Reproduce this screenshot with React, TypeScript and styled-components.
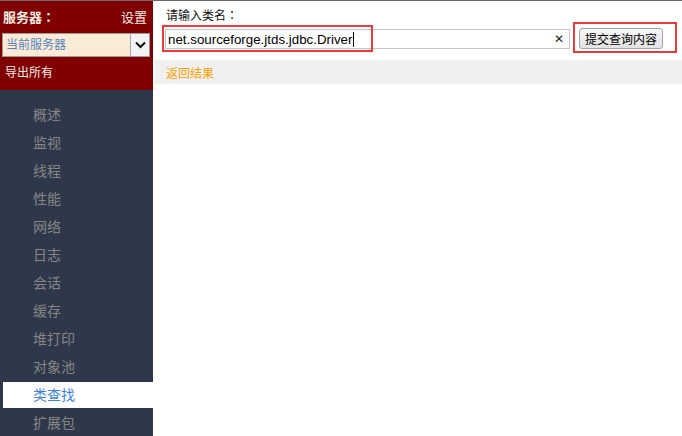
import React from "react";
import styled, { createGlobalStyle } from "styled-components";

const GlobalStyle = createGlobalStyle`
  html, body { margin: 0; padding: 0; background: #fff; }
  body { font-family: "Liberation Sans", "Noto Sans CJK SC", sans-serif; }
  * { box-sizing: border-box; }
`;

const CJK = `"Liberation Sans", "Noto Sans CJK SC", sans-serif`;

const Page = styled.div`
  display: flex;
  height: 436px;
  border-top: 1px solid #6a6a6a;
  overflow: hidden;
`;

const Sidebar = styled.aside`
  width: 153px;
  flex: none;
  display: flex;
  flex-direction: column;
  background: #2e384a;
`;

const ServerPanel = styled.div`
  background: #800000;
  padding: 6px 0 8px 0;
  display: flex;
  flex-direction: column;
`;

const HeaderRow = styled.div`
  display: flex;
  justify-content: space-between;
  align-items: center;
  height: 18px;
  padding: 0 6px 0 3px;
  font-family: ${CJK};
  color: #f7ece4;
`;

const Title = styled.span`
  font-size: 13px;
  font-weight: bold;
`;

const Colon = styled.span`
  font-family: "Noto Sans CJK TC", "Noto Sans CJK SC", sans-serif;
`;

const SettingLink = styled.span`
  font-size: 13px;
`;

const SelectBox = styled.div`
  margin: 8px 3px 0 2px;
  height: 24px;
  display: flex;
  align-items: stretch;
  border: 1px solid #9a9a9a;
  background: #faebd7;
`;

const SelectText = styled.span`
  flex: 1;
  padding-left: 3px;
  font-family: ${CJK};
  font-size: 12px;
  line-height: 22px;
  color: #5584bd;
`;

const SelectArrow = styled.span`
  width: 19px;
  display: flex;
  align-items: center;
  justify-content: center;
  background: #f3f3f3;
  border-left: 1px solid #a8a8a8;
`;

const ExportRow = styled.div`
  margin-top: 7px;
  height: 18px;
  line-height: 18px;
  padding-left: 5px;
  font-family: ${CJK};
  font-size: 12px;
  color: #f7ece4;
`;

const Nav = styled.nav`
  display: flex;
  flex-direction: column;
  padding-top: 10px;
`;

const NavItem = styled.div<{ $active?: boolean }>`
  margin: 2px 0 0 3px;
  height: 26px;
  line-height: 26px;
  padding-left: 30px;
  font-family: ${CJK};
  font-size: 14px;
  color: ${(p) => (p.$active ? "#3d7fe0" : "#868686")};
  background: ${(p) => (p.$active ? "#ffffff" : "transparent")};
`;

const Main = styled.main`
  position: relative;
  flex: 1;
  display: flex;
  flex-direction: column;
  padding-left: 2px;
`;

const Form = styled.div`
  padding: 7px 0 0 10px;
  display: flex;
  flex-direction: column;
`;

const Label = styled.div`
  font-family: ${CJK};
  font-size: 12px;
  line-height: 14px;
  color: #111;
  padding-left: 1px;
`;

const SearchRow = styled.div`
  display: flex;
  align-items: flex-start;
  margin-top: 5px;
  gap: 9px;
`;

const InputBox = styled.div`
  margin-top: 1px;
  width: 405px;
  height: 20px;
  display: flex;
  align-items: center;
  border: 1px solid #c4c4c4;
  padding: 0 5px 0 2px;
`;

const InputText = styled.span`
  font-family: "Liberation Sans", Arial, sans-serif;
  font-size: 13.333px;
  color: #000;
  white-space: nowrap;
`;

const Caret = styled.span`
  display: inline-block;
  width: 1px;
  height: 15px;
  background: #000;
  margin-left: 1px;
`;

const Spacer = styled.span`
  flex: 1;
`;

const ClearIcon = styled.span`
  font-family: "DejaVu Sans", sans-serif;
  font-size: 12px;
  color: #222;
  line-height: 1;
`;

const SubmitButton = styled.button`
  height: 21px;
  width: 84px;
  padding: 0;
  font-family: ${CJK};
  font-size: 12px;
  color: #000;
  border: 1px solid #a5a5a5;
  border-radius: 3px;
  background: linear-gradient(#f7f7f7, #e2e2e2);
`;

const ResultBar = styled.div`
  margin-top: 11px;
  height: 24px;
  line-height: 24px;
  background: #f0f0f0;
  padding: 2px 0 0 11px;
  font-family: ${CJK};
  font-size: 12px;
  color: #ffa200;
`;

const Highlight = styled.div<{ $l: number; $t: number; $w: number; $h: number }>`
  position: absolute;
  left: ${(p) => p.$l}px;
  top: ${(p) => p.$t}px;
  width: ${(p) => p.$w}px;
  height: ${(p) => p.$h}px;
  border: 2px solid #f03a3a;
  pointer-events: none;
`;

const menu = ["概述", "监视", "线程", "性能", "网络", "日志", "会话", "缓存", "堆打印", "对象池", "类查找", "扩展包"];

export default function App() {
  return (
    <>
      <GlobalStyle />
      <Page>
        <Sidebar>
          <ServerPanel>
            <HeaderRow>
              <Title>
                服务器<Colon>：</Colon>
              </Title>
              <SettingLink>设置</SettingLink>
            </HeaderRow>
            <SelectBox>
              <SelectText>当前服务器</SelectText>
              <SelectArrow>
                <svg width="11" height="8" viewBox="0 0 11 8">
                  <path d="M1 1.5 L5.5 6 L10 1.5" fill="none" stroke="#111" strokeWidth="2" />
                </svg>
              </SelectArrow>
            </SelectBox>
            <ExportRow>导出所有</ExportRow>
          </ServerPanel>
          <Nav>
            {menu.map((m) => (
              <NavItem key={m} $active={m === "类查找"}>
                {m}
              </NavItem>
            ))}
          </Nav>
        </Sidebar>
        <Main>
          <Form>
            <Label>
              请输入类名<Colon>：</Colon>
            </Label>
            <SearchRow>
              <InputBox>
                <InputText>net.sourceforge.jtds.jdbc.Driver</InputText>
                <Caret />
                <Spacer />
                <ClearIcon>✕</ClearIcon>
              </InputBox>
              <SubmitButton>提交查询内容</SubmitButton>
            </SearchRow>
          </Form>
          <ResultBar>返回结果</ResultBar>
          <Highlight $l={9} $t={24} $w={211} $h={27} />
          <Highlight $l={420} $t={21} $w={104} $h={31} />
        </Main>
      </Page>
    </>
  );
}
